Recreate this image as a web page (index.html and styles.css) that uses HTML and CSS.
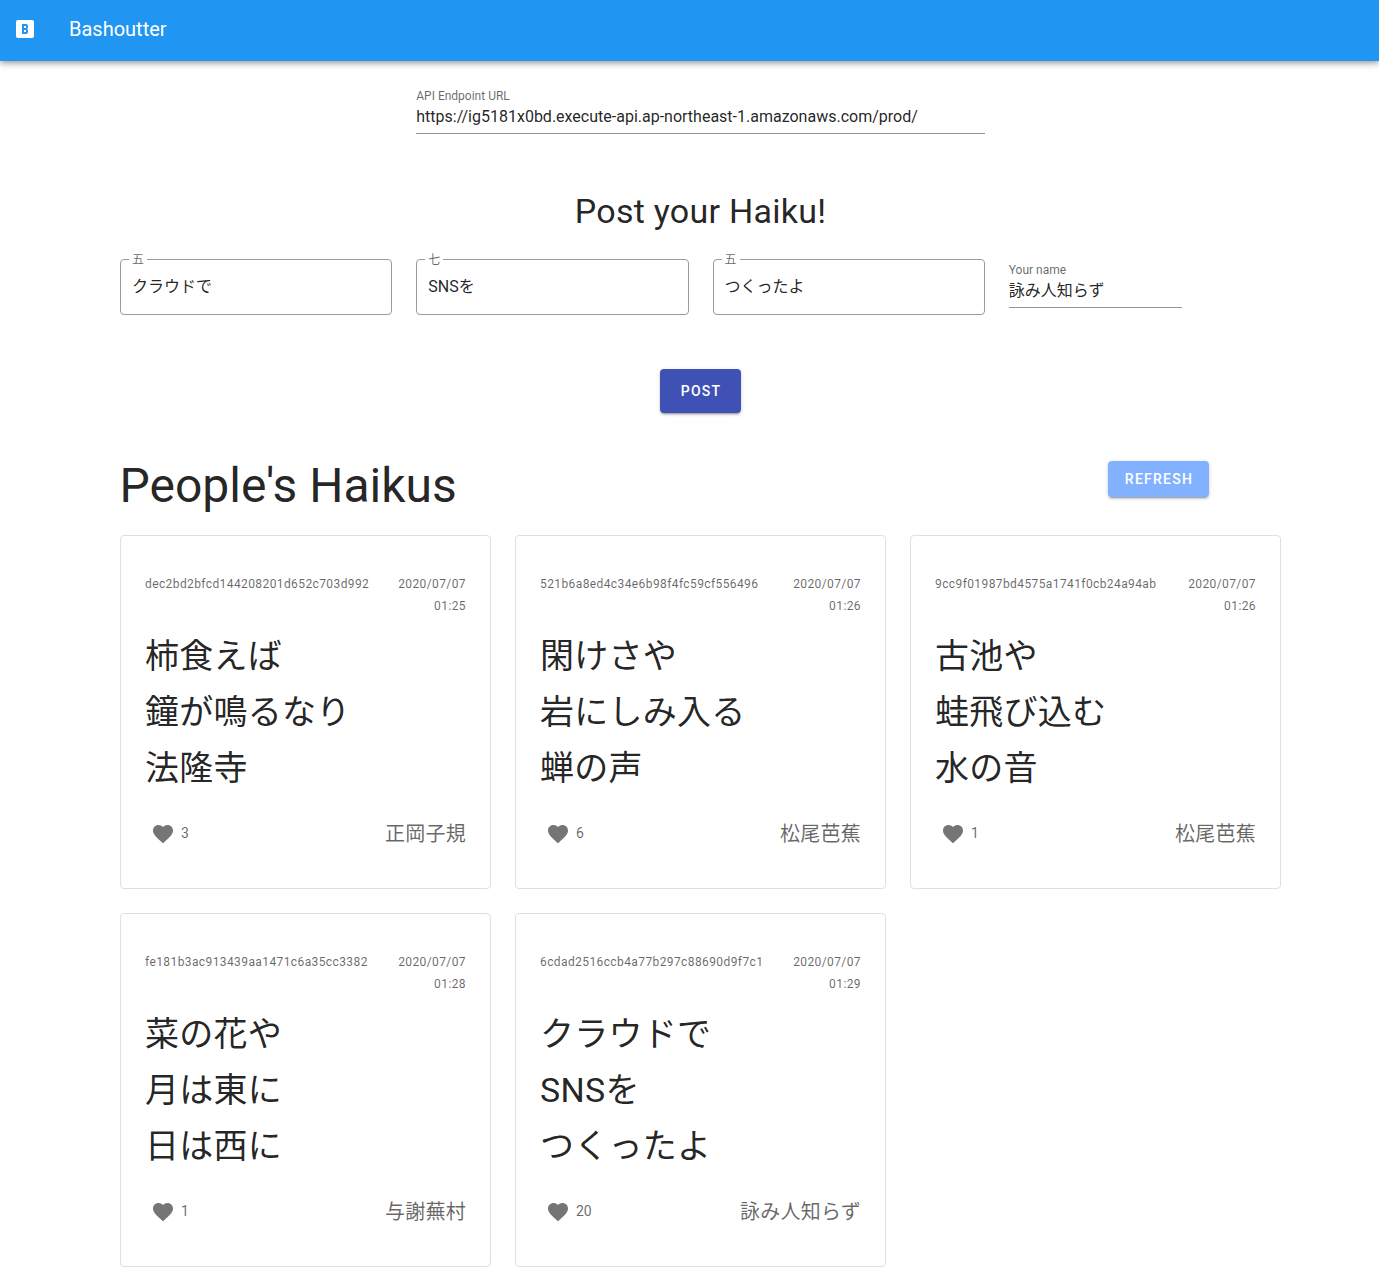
FILE: index.html
```html
<!DOCTYPE html>
<html lang="ja">
<head>
<meta charset="utf-8">
<title>Bashoutter</title>
<link rel="stylesheet" href="styles.css">
</head>
<body>
<svg class="sprite" aria-hidden="true">
  <symbol id="heart" viewBox="0 0 24 24"><path d="M12,21.35L10.55,20.03C5.4,15.36 2,12.27 2,8.5C2,5.41 4.42,3 7.5,3C9.24,3 10.91,3.81 12,5.08C13.09,3.81 14.76,3 16.5,3C19.58,3 22,5.41 22,8.5C22,12.27 18.6,15.36 13.45,20.03L12,21.35Z"/></symbol>
</svg>
<header class="app-bar">
  <svg class="logo" viewBox="0 0 24 24"><path d="M5,3A2,2 0 0,0 3,5V19A2,2 0 0,0 5,21H19A2,2 0 0,0 21,19V5A2,2 0 0,0 19,3H5M15,10.5C15,11.3 14.3,12 13.5,12C14.3,12 15,12.7 15,13.5V15A2,2 0 0,1 13,17H9V7H13A2,2 0 0,1 15,9V10.5M13,15V13H11V15H13M13,11V9H11V11H13Z"/></svg>
  <span class="title">Bashoutter</span>
</header>
<main class="container">
  <label class="field endpoint">
    <span class="field-label">API Endpoint URL</span>
    <input class="field-input" value="https://ig5181x0bd.execute-api.ap-northeast-1.amazonaws.com/prod/">
  </label>
  <h2 class="post-heading">Post your Haiku!</h2>
  <form class="post-form">
    <fieldset class="outlined"><legend>五</legend><input class="field-input" value="クラウドで"></fieldset>
    <fieldset class="outlined"><legend>七</legend><input class="field-input" value="SNSを"></fieldset>
    <fieldset class="outlined"><legend>五</legend><input class="field-input" value="つくったよ"></fieldset>
    <label class="field name">
      <span class="field-label">Your name</span>
      <input class="field-input" value="詠み人知らず">
    </label>
  </form>
  <button class="btn btn-post">POST</button>
  <div class="list-header">
    <h1 class="list-heading">People's Haikus</h1>
    <button class="btn btn-refresh">REFRESH</button>
  </div>
  <section class="cards">
    <article class="card">
      <div class="meta"><span>dec2bd2bfcd144208201d652c703d992</span><time>2020/07/07<br>01:25</time></div>
      <p class="haiku">柿食えば<br>鐘が鳴るなり<br>法隆寺</p>
      <div class="foot"><svg class="heart"><use href="#heart"/></svg><span class="count">3</span><span class="author">正岡子規</span></div>
    </article>
    <article class="card">
      <div class="meta"><span>521b6a8ed4c34e6b98f4fc59cf556496</span><time>2020/07/07<br>01:26</time></div>
      <p class="haiku">閑けさや<br>岩にしみ入る<br>蝉の声</p>
      <div class="foot"><svg class="heart"><use href="#heart"/></svg><span class="count">6</span><span class="author">松尾芭蕉</span></div>
    </article>
    <article class="card">
      <div class="meta"><span>9cc9f01987bd4575a1741f0cb24a94ab</span><time>2020/07/07<br>01:26</time></div>
      <p class="haiku">古池や<br>蛙飛び込む<br>水の音</p>
      <div class="foot"><svg class="heart"><use href="#heart"/></svg><span class="count">1</span><span class="author">松尾芭蕉</span></div>
    </article>
    <article class="card">
      <div class="meta"><span>fe181b3ac913439aa1471c6a35cc3382</span><time>2020/07/07<br>01:28</time></div>
      <p class="haiku">菜の花や<br>月は東に<br>日は西に</p>
      <div class="foot"><svg class="heart"><use href="#heart"/></svg><span class="count">1</span><span class="author">与謝蕪村</span></div>
    </article>
    <article class="card">
      <div class="meta"><span>6cdad2516ccb4a77b297c88690d9f7c1</span><time>2020/07/07<br>01:29</time></div>
      <p class="haiku">クラウドで<br>SNSを<br>つくったよ</p>
      <div class="foot"><svg class="heart"><use href="#heart"/></svg><span class="count">20</span><span class="author">詠み人知らず</span></div>
    </article>
  </section>
</main>
</body>
</html>
```
FILE: styles.css
```css
* { box-sizing: border-box; margin: 0; padding: 0; }
body {
  background: #fff;
  color: rgba(0, 0, 0, .87);
  font-family: Roboto, "Noto Sans CJK JP", sans-serif;
  font-size: 16px;
  line-height: 24px;
  overflow-x: hidden;
}
h1, h2 { font-weight: 400; }
input, button { font: inherit; color: inherit; border: 0; outline: 0; background: none; }
.sprite { display: none; }

.app-bar {
  display: flex;
  align-items: center;
  height: 61px;
  padding: 0 13px 3px;
  gap: 32px;
  background: #2095f2;
  color: #fff;
  box-shadow: 0 2px 4px -1px rgba(0,0,0,.2), 0 4px 5px rgba(0,0,0,.14), 0 1px 10px rgba(0,0,0,.12);
}
.logo { width: 24px; height: 24px; fill: currentColor; }
.title { font-size: 20px; }

.container { width: 1161px; margin-left: 120px; padding-top: 25px; }

.field { display: flex; flex-direction: column; height: 48px; border-bottom: 1px solid #949494; }
.field-label { font-size: 12px; line-height: 20px; color: rgba(0, 0, 0, .6); }
.field-input { display: block; width: 100%; height: 24px; line-height: 24px; }
.field .field-input { margin-top: -1px; }
.endpoint { width: 568.5px; margin-left: 296.25px; }

.post-heading {
  margin-top: 57px;
  font-size: 34px;
  line-height: 40px;
  letter-spacing: .25px;
  text-align: center;
}
.post-form {
  display: grid;
  grid-template-columns: repeat(3, 272.25px) 173.5px;
  column-gap: 24px;
  margin-top: 21px;
  height: 63px;
}
.outlined {
  height: 63px;
  min-width: 0;
  padding: 0 11px;
  border: 1px solid #9b9b9b;
  border-radius: 4px;
}
.outlined legend {
  margin-left: -3px;
  padding: 0 3px;
  height: 15px;
  font-size: 12px;
  line-height: 16px;
  color: rgba(0, 0, 0, .6);
}
.outlined .field-input { margin-top: 8px; }
.name { margin-top: 8px; }

.btn {
  display: block;
  padding-left: 1px;
  border-radius: 4px;
  color: #fff;
  font-size: 14px;
  font-weight: 500;
  letter-spacing: 1.25px;
  box-shadow: 0 3px 1px -2px rgba(0,0,0,.2), 0 2px 2px rgba(0,0,0,.14), 0 1px 5px rgba(0,0,0,.12);
}
.btn-post { width: 81px; height: 44px; margin: 54px auto 0; background: #3f51b5; }
.btn-refresh { width: 101px; height: 36px; margin-right: 72px; background: #82b1ff; }
.list-header { display: flex; justify-content: space-between; align-items: flex-start; margin-top: 48px; height: 74px; }
.list-heading { margin-left: -.5px; font-size: 48px; line-height: 50px; }

.cards { display: grid; grid-template-columns: repeat(3, 371px); gap: 24px; }
.card { height: 354px; padding: 37px 24px 0; border: 1px solid #e0e0e0; border-radius: 4px; }
.meta {
  display: flex;
  justify-content: space-between;
  font-size: 12px;
  line-height: 22px;
  letter-spacing: .4px;
  color: rgba(0, 0, 0, .6);
}
.meta time { text-align: right; }
.haiku { margin-top: 11px; font-size: 34px; line-height: 56px; letter-spacing: .25px; }
.foot { display: flex; align-items: center; height: 48px; margin-top: 14px; padding-left: 6px; color: rgba(0, 0, 0, .6); }
.heart { width: 24px; height: 24px; fill: #757575; }
.count { margin-left: 6px; padding-bottom: 2px; font-size: 14px; }
.author { margin-left: auto; font-size: 20px; letter-spacing: .25px; }
```
